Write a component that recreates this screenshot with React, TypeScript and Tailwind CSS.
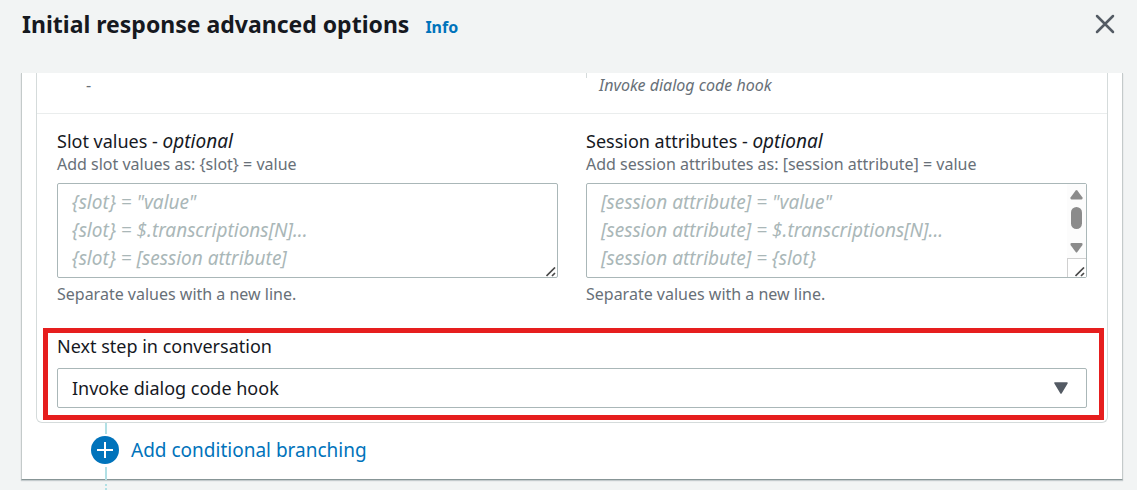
import React from "react";

function ResizeGrip() {
  return (
    <svg className="pointer-events-none absolute right-[2px] bottom-[1px] h-[10px] w-[10px]" viewBox="0 0 10 10" aria-hidden="true">
      <path d="M0.500 9 9 0.500M6 9 9 6" stroke="#4a4a4a" strokeWidth="1.700" fill="none" />
    </svg>
  );
}

function ScrollTrack() {
  return (
    <div className="pointer-events-none absolute top-px right-px bottom-px flex w-[19px] flex-col bg-[#fcfcfc]">
      <svg className="min-h-0 w-full flex-1" viewBox="0 0 19 74" aria-hidden="true">
        <path d="M8.700 6.500Q9.500 5.500 10.300 6.500L15.500 13.500Q16 15.500 14.500 15.500H4.500Q3 15.500 3.500 13.500Z" fill="#8b8b8b" />
        <rect x="4" y="23" width="11" height="22" rx="5.500" fill="#8b8b8b" />
        <path d="M8.700 68Q9.500 69 10.300 68L15.500 61Q16 59 14.500 59H4.500Q3 59 3.500 61Z" fill="#8b8b8b" />
      </svg>
      <div className="h-[19px] border-t border-l border-[#d0d0d0] bg-white" />
    </div>
  );
}

type FieldProps = {
  id: string;
  label: string;
  description: string;
  placeholder: string;
  scroll?: boolean;
};

function TextField({ id, label, description, placeholder, scroll }: FieldProps) {
  return (
    <div className="min-w-0">
      <label htmlFor={id} className="block text-[18px] leading-6 text-[#16191f]">
        {label} - <i className="text-[19px]">optional</i>
      </label>
      <p className="text-[16px] leading-[22px] text-[#687078]">{description}</p>
      <div className="relative mt-2">
        <textarea
          id={id}
          rows={3}
          placeholder={placeholder}
          className="block h-[95px] w-full resize-none overflow-hidden rounded-[2px] border border-[#aab7b8] bg-white px-[14px] py-[4px] text-[19px] leading-7 text-[#16191f] placeholder:text-[#aab7b8] placeholder:italic"
        />
        {scroll && <ScrollTrack />}
        <ResizeGrip />
      </div>
      <p className="mt-[5px] text-[16px] leading-[22px] text-[#687078]">Separate values with a new line.</p>
    </div>
  );
}

export default function App() {
  return (
    <div className="min-h-screen overflow-hidden bg-[#f2f4f4] font-['Noto_Sans','Open_Sans',sans-serif]">
      <header className="flex h-[73px] items-start justify-between pt-2 pr-[22px] pl-[22px]">
        <div className="flex items-baseline gap-4">
          <h1 className="text-[23px] leading-8 font-bold text-[#16191f]">Initial response advanced options</h1>
          <a href="#info" className="text-[16px] font-bold text-[#0073bb]">Info</a>
        </div>
        <button type="button" aria-label="Close" className="mt-[6px]">
          <svg className="size-5" viewBox="0 0 20 20" aria-hidden="true">
            <path d="M2 2 18 18M18 2 2 18" stroke="#545b64" strokeWidth="2.500" strokeLinecap="round" />
          </svg>
        </button>
      </header>

      <main className="mr-[14px] ml-[21px] border-x border-b border-x-[#c4caca] border-b-[#879596] bg-white px-[14px] shadow-[0_1px_1px_#001c2430]">
        <section className="relative rounded-b-[6px] border-x border-b border-[#d5dbdb] pb-[14px]">
          <div className="grid h-[41px] grid-cols-2 gap-7 border-b border-[#eaeded] px-5 text-[16px] leading-[22px] text-[#687078]">
            <p className="pt-[1px] pl-[29px]">-</p>
            <div className="flex items-start">
              <span className="h-[5px] w-px bg-[#d5dbdb]" />
              <i className="pt-[1px] pl-3">Invoke dialog code hook</i>
            </div>
          </div>

          <div className="grid grid-cols-2 gap-7 px-5 pt-[15px]">
            <TextField
              id="slot-values"
              label="Slot values"
              description="Add slot values as: {slot} = value"
              placeholder={'{slot} = "value"\n{slot} = $.transcriptions[N]...\n{slot} = [session attribute]'}
            />
            <TextField
              id="session-attributes"
              label="Session attributes"
              description="Add session attributes as: [session attribute] = value"
              placeholder={'[session attribute] = "value"\n[session attribute] = $.transcriptions[N]...\n[session attribute] = {slot}'}
              scroll
            />
          </div>

          <div className="mt-[29px] px-5">
            <label htmlFor="next-step" className="block text-[18px] leading-6 text-[#16191f]">
              Next step in conversation
            </label>
            <div className="relative mt-[10px]">
              <select
                id="next-step"
                className="block h-10 w-full appearance-none rounded-[2px] border border-[#aab7b8] bg-white px-[14px] text-[18px] text-[#16191f]"
              >
                <option>Invoke dialog code hook</option>
              </select>
              <svg className="pointer-events-none absolute top-[14px] right-[18px] h-3 w-4" viewBox="0 0 16 12" aria-hidden="true">
                <path d="M2 1H14L8 11Z" fill="#545b64" stroke="#545b64" strokeWidth="1.500" strokeLinejoin="round" />
              </svg>
            </div>
          </div>
          <div className="pointer-events-none absolute right-[3px] bottom-[2px] left-[6px] h-[92px] border-[5px] border-[#e61e1e]" />
        </section>

        <div className="relative flex h-14 items-start pt-[13px] pl-[55px]">
          <span className="absolute top-0 left-[69px] h-[11px] w-[2px] bg-[#b1e0e5]" />
          <button type="button" className="flex items-center gap-3 text-[19px] leading-7 text-[#0073bb]">
            <svg className="size-7" viewBox="0 0 28 28" aria-hidden="true">
              <circle cx="14" cy="14" r="14" fill="#0073bb" />
              <path d="M14 6V22M6 14H22" stroke="#fff" strokeWidth="2" />
            </svg>
            Add conditional branching
          </button>
          <span className="absolute top-[44px] left-[69px] h-[13px] w-[2px] bg-[#b1e0e5]" />
          <span className="absolute top-[61px] left-[69px] h-[2px] w-[2px] bg-[#b1e0e5]" />
          <span className="absolute top-[65px] left-[69px] h-[2px] w-[2px] bg-[#b1e0e5]" />
        </div>
      </main>
    </div>
  );
}
